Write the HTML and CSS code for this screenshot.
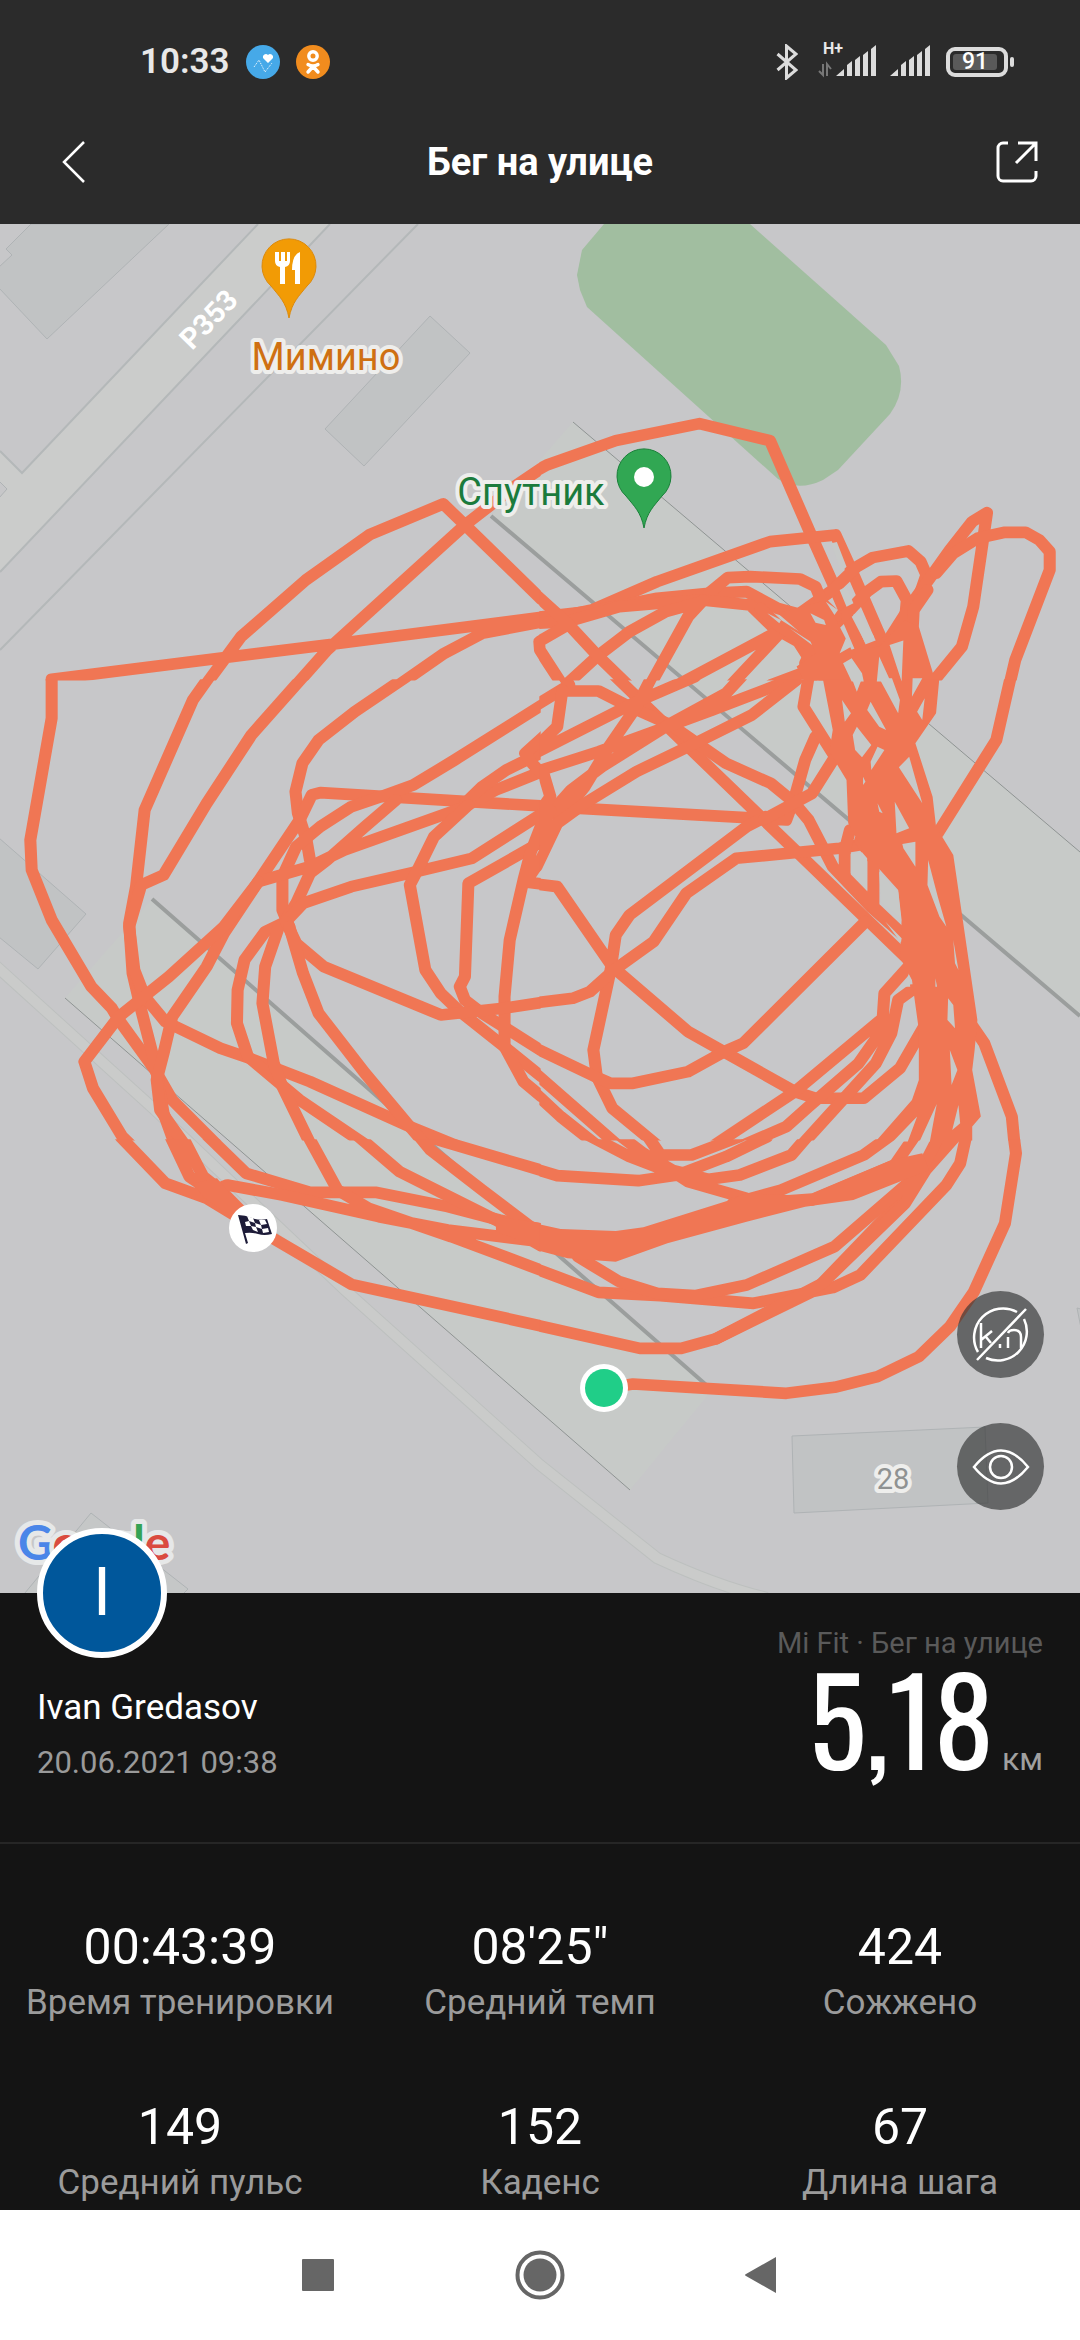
FILE: index.html
```html
<!DOCTYPE html>
<html lang="ru">
<head>
<meta charset="utf-8">
<meta name="viewport" content="width=device-width, initial-scale=1">
<title>Бег на улице</title>
<link rel="stylesheet" href="styles.css">
</head>
<body>
<header class="top">
  <div class="status">
    <div class="status-group">
      <span class="clock">10:33</span>
      <svg class="app-icon" viewBox="0 0 34 34" aria-hidden="true">
        <circle cx="17" cy="17" r="17" fill="#46a9e8"/>
        <path d="M22 18l-5-5a3 3 0 0 1 5-3 3 3 0 0 1 5 3z" fill="#fff"/>
        <path d="M8 22l5-7 6 12 7-9" fill="none" stroke="#fff" stroke-width="1" stroke-dasharray="1 1"/>
      </svg>
      <svg class="app-icon" viewBox="0 0 34 34" aria-hidden="true">
        <circle cx="17" cy="17" r="17" fill="#f18c1e"/>
        <g fill="none" stroke="#fff" stroke-width="3.4" stroke-linecap="round">
          <circle cx="17" cy="11" r="4.2"/>
          <path d="M12 19.500q5 3 10 0M17 21.500l-5 5.500M17 21.500l5 5.500"/>
        </g>
      </svg>
    </div>
    <div class="status-group status-right">
      <svg class="bluetooth" viewBox="0 0 22 36" aria-hidden="true"><path d="M1.500 10L20 26l-9.500 8V2L20 10 1.500 26" fill="none" stroke="#dcdcdc" stroke-width="3"/></svg>
      <div class="network">
        <svg class="network-icon" viewBox="0 0 58 34" aria-hidden="true">
          <g fill="#dcdcdc"><path d="M18 31l8-7v7zM29 20l5-4v15h-5zM37 15l5-4v20h-5zM45 10l5-4v25h-5zM53 4l5-4v31h-5z"/></g>
          <path d="M5 19v11l-4-4M9 31V19l4 5" fill="none" stroke="#777" stroke-width="2"/>
        </svg>
        <span class="network-type">H+</span>
      </div>
      <svg class="signal" viewBox="0 0 40 34" aria-hidden="true"><path fill="#dcdcdc" d="M0 31l8-7v7zM11 20l5-4v15h-5zM19 15l5-4v20h-5zM27 10l5-4v25h-5zM35 4l5-4v31h-5z"/></svg>
      <div class="battery"><span class="battery-level">91</span></div>
    </div>
  </div>
  <div class="titlebar">
    <button class="icon-button" type="button" aria-label="Назад">
      <svg class="back-icon" viewBox="0 0 24 44"><path d="M22 2L2 22l20 20" fill="none" stroke="#fff" stroke-width="2.500"/></svg>
    </button>
    <h1 class="title">Бег на улице</h1>
    <button class="icon-button icon-button-end" type="button" aria-label="Поделиться">
      <svg class="share-icon" viewBox="0 0 42 42"><path d="M12 2H7a5 5 0 0 0-5 5v28a5 5 0 0 0 5 5h28a5 5 0 0 0 5-5v-5M22 2h18v18M39 3L20 22" fill="none" stroke="#fff" stroke-width="3"/></svg>
    </button>
  </div>
</header>

<main>
<section class="map" aria-label="Карта маршрута">
  <svg class="map-canvas" viewBox="0 224 1080 1369">
    <defs>
      <clipPath id="tile"><rect x="-2" y="-2" width="1572" height="1384"/></clipPath>
    </defs>
    <rect y="224" width="1080" height="1369" fill="#c7c7c9"/>
    <!-- roads and buildings -->
    <path d="M258 224L22 473 0 451V572L330 224z" fill="#cbcccb"/>
    <g fill="none" stroke="#b4b8b9" stroke-width="2">
      <path d="M258 224L22 473 0 451M330 224L0 572M418 224L0 650"/>
    </g>
    <g fill="#c1c3c4" stroke="#afb3b5" stroke-width="1">
      <path d="M31 224L6 249l6 6L-1 267v21l48 51 122-115zM430 316l40 37-106 113-39-37zM-1 838l87 76-48 55-39-32z"/>
      <path d="M792 1436l193-9 3 76-194 10zM1081 1309l-4-1 4 20z"/>
      <path d="M91 1513l97 76-10 10H20z" fill="#c5c7c7"/>
      <path d="M-1 481l8 8-8 9z" fill="#c7c7c9"/>
    </g>
    <g fill="#c7cac8">
      <path d="M65 998l87-99 560 491-82 100zM491 516l82-94 507 430v162z"/>
    </g>
    <path d="M65 998l565 492M573 422l507 430" fill="none" stroke="#8f9493" stroke-width="1"/>
    <path d="M152 899l560 491M491 516l589 500" fill="none" stroke="#9b9e9d" stroke-width="4"/>
    <path d="M-5 965L155 1110l190 180 195 175 117 93q60 28 110 40" fill="none" stroke="#bdc0bf" stroke-width="12"/>
    <path d="M-5 965L155 1110l190 180 195 175 117 93q60 28 110 40" fill="none" stroke="#cacbca" stroke-width="10"/>
    <path d="M604 224L582 250 577 275 580 290 587 307 778 479Q798 492 823 480L838 470 890 414Q906 392 899 366L886 345 750 224z" fill="#a1bea0"/>

    <text class="road-name" transform="translate(192 351) rotate(-46)">P353</text>

    <!-- the track, one group per map tile -->
    <g class="track">
      <g transform="translate(0 220) scale(.3444 .3333)" clip-path="url(#tile)">
        <path d="M600 1390L700 1250 888 1080 1075 943 1287 852 1350 915 1572 1138M1572 745L1500 795 1350 915 950 1290 860 1395M150 1400V1378L970 1272 1572 1192M1165 1390L1290 1300 1400 1240 1572 1206M1600 1244L1566 1265 1568 1290 1580 1310"/>
      </g>
      <g transform="translate(540 220) scale(.3444 .3333)" clip-path="url(#tile)">
        <path d="M-10 752L20 735 220 662 463 611 668 662 785 940 850 1090 950 1330 970 1390"/>
        <path d="M-10 1205L150 1170 340 1085 668 965 858 945 900 1040 980 1230 1050 1390"/>
        <path d="M755 1180L850 1110 920 1040 965 1013 1070 993 1105 1025 1122 1065 1090 1160 1000 1290"/>
        <path d="M810 1260L900 1170 950 1115 990 1085 1035 1083 1065 1140 1060 1200 1070 1390"/>
        <path d="M1000 1280L1080 1150 1190 990 1255 905 1298 878 1285 970 1258 1160 1225 1280 1130 1400"/>
        <path d="M1150 1060L1200 1000 1270 955 1350 937 1410 937 1450 960 1480 995 1480 1050 1380 1320 1363 1395"/>
        <path d="M1125 1110L1085 1170 1082 1230 1125 1395"/>
        <path d="M-10 1192L140 1175 340 1135 490 1120 600 1115 690 1165 760 1185 830 1250"/>
        <path d="M490 1120L545 1073 610 1070 755 1077 800 1100 820 1150 860 1190"/>
        <path d="M-10 1210L80 1205 230 1160 350 1150 470 1140 610 1155 680 1225 750 1265 790 1330"/>
        <path d="M470 1145L365 1175 260 1235 165 1310 70 1400M475 1140L430 1190 320 1395M690 1235L400 1395M700 1235L555 1395"/>
        <path d="M-10 1126L80 1210 165 1305 260 1400M80 1215L-3 1265 -1 1290 65 1395"/>
        <path d="M640 1165L690 1215 790 1280 830 1390M670 1395L800 1345 900 1310 1050 1250M790 1390L770 1330 830 1200"/>
      </g>
      <g transform="translate(0 680) scale(.3444 .3333)" clip-path="url(#tile)">
        <path d="M150 -10V115L88 480 92 570 150 720 265 920 325 985 345 1020 450 1170 500 1260 635 1400"/>
        <path d="M608 -10L560 60 420 390 395 620 375 730 385 880 410 990 450 1150 475 1300 510 1400"/>
        <path d="M880 -10L730 165 600 370 475 585 410 615 375 740 390 870 420 950 480 1025 640 1105 725 1135 900 1205 1190 1340 1320 1395"/>
        <path d="M1180 -10L1030 95 925 180 878 250 858 335 865 400 890 480 900 540"/>
        <path d="M1572 378L930 338 905 345 870 420 750 605 650 760 600 860 500 1010 475 1120 455 1200 465 1290 540 1400"/>
        <path d="M1572 76L1320 240 1200 315 1120 345 1020 380 930 440 860 500 820 590 820 690 840 740"/>
        <path d="M1150 360L1060 440 950 540 900 580 860 670 830 720M750 605L900 560 1000 510 1340 385 1440 330 1572 275"/>
        <path d="M1350 370L1400 320 1470 270 1572 218M1590 390L1370 535 1200 577 1020 620 880 670 830 725 770 755 710 840 690 930 688 1030 720 1130 800 1200 870 1260 1070 1400"/>
        <path d="M810 740L770 860 762 970 795 1150 820 1220 905 1400"/>
        <path d="M1360 375L1260 470 1210 575 1190 615 1235 870 1280 940 1330 990 1470 1105 1572 1190"/>
        <path d="M1590 475L1360 610 1350 890 1335 920 1350 960 1400 1000 1572 1112"/>
        <path d="M1570 440L1540 520 1520 600 1480 780 1465 950 1465 1100 1520 1205 1572 1250M1520 605L1572 612M1600 480L1570 540 1530 600"/>
        <path d="M830 725L860 790 940 860 1280 1005 1460 985 1572 968"/>
        <path d="M840 740L880 880 925 1000 1060 1180 1190 1340 1240 1400"/>
        <path d="M750 605L650 740 490 890 345 1010 245 1145 270 1225 355 1370 385 1400M1600 150L1525 220 1545 250 1572 280"/>
      </g>
      <g transform="translate(540 680) scale(.3444 .3333)" clip-path="url(#tile)">
        <path d="M210 -20L350 120 560 330 740 510 950 720 1070 840M-10 378L690 418 715 420 740 350 770 240 800 170"/>
        <path d="M780 -10L765 80 850 220M-10 75L85 15 70 -10M80 33L170 33 250 75 380 135 450 185 540 250 670 310 735 365 780 420 850 560 960 680 1060 770"/>
        <path d="M65 30L50 140 -10 200M-10 217L270 70 450 -10M325 -10L280 80 200 200 130 320 60 410 -10 535M-10 275L170 215 370 140 500 90 740 -5M585 -10L540 40 380 130 180 260 90 330 30 400"/>
        <path d="M745 0L615 105 450 190 280 275 130 370 50 430 -10 560M-10 265L10 280 30 350 -10 410M30 390L-10 480"/>
        <path d="M655 410L600 440 260 705 220 765 205 870 155 1110 165 1190 210 1285 345 1400M-10 612L50 620 210 860 430 1055 740 1235 800 1255 940 1255 1045 1165 1115 1040"/>
        <path d="M-10 968L95 955 145 935 215 870 330 785 425 640 570 535 870 505 1100 465 1155 460 1325 180 1367 -10"/>
        <path d="M-10 1106L160 1190 205 1210 270 1210 430 1175 535 1115 590 1090 945 725M-10 1183L230 1400M-10 1243L60 1310 170 1400"/>
        <path d="M650 418L790 340 860 225M900 450L885 510 885 590 970 680M930 480L968 540 968 680 1060 770"/>
        <path d="M1070 860L1000 940 995 1015 740 1235 500 1400M1080 930L1040 960 1020 1060 975 1150 760 1395M1000 1040L925 1150 780 1280 715 1340 580 1400"/>
        <path d="M1180 530L1250 1030 1290 1090 1370 1310 1378 1395"/>
      </g>
      <g transform="translate(0 1140) scale(.3444 .3333)" clip-path="url(#tile)">
        <path d="M350 -10L480 130 600 175 735 260 900 360 1020 433 1572 558M495 -10L550 110 700 215M530 -10L590 110 640 150 735 250M600 -15L715 100 900 157 1090 157 1300 200 1450 240 1572 268"/>
        <path d="M600 160L660 135 820 165 1100 230 1300 270 1572 305M890 -20L980 150 1070 205 1310 290 1572 391M1030 -20L1160 95 1440 240 1572 318M1210 -20L1250 30 1400 150 1572 285M1240 -10L1572 91"/>
      </g>
      <g transform="translate(540 1140) scale(.3444 .3333)" clip-path="url(#tile)">
        <path d="M190 745L270 732 715 760 855 742 980 710 1100 650 1190 560 1260 455 1350 250 1382 40 1375 -15"/>
        <path d="M-10 556L290 625 410 625 510 597 800 450 1070 160M1238 -15L1220 70 1180 135 930 405 850 443 620 490 350 467 170 457 -10 387"/>
        <path d="M1210 -15L1120 90 1060 190 820 430 510 597M1180 0L1090 110 855 320 600 435 450 467 340 460 230 425 110 350"/>
        <path d="M-10 88L50 107 285 122 400 105 540 50 660 -10M140 -15L260 50 400 105 430 125 600 175M310 -15L350 45 440 45 580 -10M780 -15L730 45 580 105 490 118 380 90M230 -15L300 40 400 100"/>
        <path d="M1020 -15L940 45 700 150 560 190M1090 -15L1030 75 790 180M1160 -15L1115 75 1020 100"/>
      </g>
    </g>
    <!-- stretches where the laps merge -->
    <g class="track-fill">
      <g transform="translate(540 220) scale(.3444 .3333)" clip-path="url(#tile)"><path d="M745 1165L830 1140 880 1240 905 1290 985 1280 1060 1200 1100 1220 1150 1390H770L745 1340 800 1300 790 1270 730 1215 690 1180z"/></g>
      <g transform="translate(540 680) scale(.3444 .3333)" clip-path="url(#tile)"><path d="M820 -10L850 150 840 215 890 300 895 430 940 515 1040 630 1050 720 1045 830 1080 900 1100 1050V1200L1080 1260 970 1390H1255V1340L1280 1310 1255 1170 1262 1110 1270 1020 1200 525 1150 440 1140 350 1090 190 1150 100 1160 -10z"/></g>
      <g transform="translate(0 1140) scale(.3444 .3333)" clip-path="url(#tile)"><path d="M560 130L630 115 700 200 670 230 590 170zM1440 230L1590 252V332L1440 275z"/></g>
      <g transform="translate(540 1140) scale(.3444 .3333)" clip-path="url(#tile)"><path d="M-5 252L60 267 220 273 300 262 545 182 600 160 720 165 790 160 1020 60 1110 40 1130 90 910 180 770 200 600 245 370 310 220 365 80 355 -5 332z"/></g>
    </g>
    <g class="track-gap">
      <path transform="translate(540 220) scale(.3444 .3333)" d="M785 1180L825 1200 830 1215 800 1208zM870 1110L890 1100 910 1150 890 1160zM905 1190L925 1175 970 1250 945 1270zM1015 1275L1055 1262 1050 1385zM985 1310L1018 1385H978zM830 1145L865 1170 855 1185zM890 1250L905 1280 870 1300zM880 1330L905 1315 935 1360 940 1385H905zM845 970L862 966 890 1040 875 1055zM660 1180L700 1200 695 1210zM725 1225L785 1265 790 1275z"/>
      <path transform="translate(540 680) scale(.3444 .3333)" d="M877 60L903 100 885 125zM920 140L962 195 935 232 915 210 908 165zM960 65L1005 150 985 140 950 90zM1117 55L1095 95 1110 120zM980 200L1000 210 962 270 960 245zM1072 230L1110 370 1042 262zM1030 365L1072 445 1035 460zM1052 492L1090 485V560L1055 505zM985 575L1040 635 1048 715 990 665zM902 522L935 517 950 535V630L902 580zM1127 540L1155 650 1180 740 1160 710 1125 615zM1200 780L1215 870 1205 850zM1185 955L1200 975 1205 1045 1183 1020zM1190 1110L1212 1170 1195 1215zM1152 1272L1132 1385H1102zM1095 1310L1068 1385H1025zM1215 1275L1220 1330 1197 1350zM1070 880L1075 920H1062zM938 290L945 305 938 315zM980 370L995 400 985 395zM1148 895L1153 920H1148zM1082 -5H1110L1080 50zM985 -5H1022L1045 60 1040 100zM905 -5H935L920 35zM1003 725L1050 775 1048 788z"/>
    </g>

    <!-- places -->
    <path d="M289 318c-3-16-10-22-18-32a27 27 0 1 1 36 0c-8 10-15 16-18 32z" fill="#f29b05" stroke="#dc8a0c" stroke-width="1"/>
    <path d="M275 252v9q0 5 5 6v17h5v-17q5-1 5-6v-9h-3v9h-2v-9h-4v9h-2v-9zM300 252q-8 3-8 18h3v14h5z" fill="#fff"/>
    <path d="M644 528c-3-16-10-22-18-32a27 27 0 1 1 36 0c-8 10-15 16-18 32z" fill="#31a753" stroke="#188038" stroke-width="1"/>
    <circle cx="644" cy="477" r="10" fill="#fff"/>
    <text class="place place-food" x="326" y="370" text-anchor="middle">Мимино</text>
    <text class="place place-sport" x="531" y="505" text-anchor="middle">Спутник</text>
    <text class="house" x="893" y="1489" text-anchor="middle">28</text>
    <text class="brand" x="18" y="1560"><tspan fill="#4a86e8">G</tspan><tspan fill="#da4b3f">o</tspan><tspan fill="#f4b400">o</tspan><tspan fill="#4a86e8">g</tspan><tspan fill="#34a355">l</tspan><tspan fill="#da4b3f">e</tspan></text>

    <!-- start and finish -->
    <circle cx="604" cy="1388" r="24" fill="#fff"/><circle cx="604" cy="1388" r="19" fill="#20ce88"/>
    <circle cx="253" cy="1228" r="24" fill="#fff"/>
    <g transform="translate(238 1214)">
      <path d="M0 1q7 0 14 3 8 3 15 1l5 15q-8 2-14 0-6-2-13-1l3 10-2 1z" fill="#1d1b38"/>
      <path d="M9 2l6 2 2 5-6-2zM21 6l6 0 2 4-6 1zM17 9l6 2 1 4-6-2zM7 8l4-1 2 5-5 0zM13 12l5 1 2 5-5-2zM24 15l6-1 1 4-6 1z" fill="#fff"/>
    </g>
  </svg>
  <div class="map-actions">
    <button class="map-button" type="button" aria-label="Скрыть километры">
      <svg class="map-icon" viewBox="0 0 60 60"><g fill="none" stroke="#fff" stroke-width="2.500">
        <path d="M46 7A29 29 0 0 0 7 47M15 53A29 29 0 0 0 53 14M55 4L6 55"/>
        <path d="M10 18v25M21 26l-11 9M15 32l5 6M29 39v4M37 43V32M37 28q1-3 6-3 7 0 7 7v11"/></g></svg>
    </button>
    <button class="map-button" type="button" aria-label="Показать карту">
      <svg class="map-icon" viewBox="0 0 60 60"><g fill="none" stroke="#fff" stroke-width="2.500"><path d="M3 30Q30-3 57 30 30 63 3 30z"/><circle cx="30" cy="30" r="11"/></g></svg>
    </button>
  </div>
</section>

<section class="summary">
  <div class="person">
    <div class="avatar">I</div>
    <div class="name">Ivan Gredasov</div>
    <time class="date" datetime="2021-06-20T09:38">20.06.2021 09:38</time>
  </div>
  <div class="result">
    <div class="source">Mi Fit · Бег на улице</div>
    <div class="distance"><span class="distance-value">5,18</span><span class="distance-unit">км</span></div>
  </div>
</section>

<dl class="stats">
  <div class="stat"><dt class="stat-label">Время тренировки</dt><dd class="stat-value">00:43:39</dd></div>
  <div class="stat"><dt class="stat-label">Средний темп</dt><dd class="stat-value">08'25"</dd></div>
  <div class="stat"><dt class="stat-label">Сожжено</dt><dd class="stat-value">424</dd></div>
  <div class="stat"><dt class="stat-label">Средний пульс</dt><dd class="stat-value">149</dd></div>
  <div class="stat"><dt class="stat-label">Каденс</dt><dd class="stat-value">152</dd></div>
  <div class="stat"><dt class="stat-label">Длина шага</dt><dd class="stat-value">67</dd></div>
</dl>
</main>

<nav class="system-nav" aria-label="Системная навигация">
  <button class="nav-button" type="button" aria-label="Последние"><svg class="nav-icon" viewBox="0 0 60 60"><rect x="14" y="14" width="32" height="32" rx="1" fill="#666"/></svg></button>
  <button class="nav-button" type="button" aria-label="Домой"><svg class="nav-icon" viewBox="0 0 60 60"><circle cx="30" cy="30" r="22.500" fill="none" stroke="#666" stroke-width="4"/><circle cx="30" cy="30" r="16.500" fill="#666"/></svg></button>
  <button class="nav-button" type="button" aria-label="Назад"><svg class="nav-icon" viewBox="0 0 60 60"><path d="M44 12v36L14 31q-2-1 0-2z" fill="#666"/></svg></button>
</nav>
</body>
</html>
```

FILE: styles.css
```css
* { box-sizing: border-box; }

body {
  margin: 0;
  background: #141414;
  color: #fff;
  font-family: Roboto, "Noto Sans", sans-serif;
}

button {
  padding: 0;
  border: 0;
  background: none;
  color: inherit;
  font: inherit;
}

svg { display: block; }

.top {
  background: #2b2b2b;
  padding-top: 40px;
}

.status {
  display: flex;
  justify-content: space-between;
  align-items: center;
  height: 44px;
  padding: 0 72px 0 140px;
}

.status-group {
  display: flex;
  align-items: center;
  gap: 16px;
}

.status-right { gap: 14px; }

.clock {
  color: #e8e8e8;
  font-size: 35px;
  font-weight: 600;
  line-height: 40px;
}

.app-icon { width: 34px; height: 34px; }
.bluetooth { width: 22px; height: 36px; margin-right: 6px; }
.network { position: relative; }
.network-icon { width: 58px; height: 34px; }

.network-type {
  position: absolute;
  left: 5px;
  top: -4px;
  color: #e8e8e8;
  font-size: 16px;
  font-weight: 700;
  line-height: 16px;
}

.signal { width: 40px; height: 34px; }

.battery {
  position: relative;
  width: 62px;
  height: 30px;
  padding: 3px;
  border: 4px solid #dcdcdc;
  border-radius: 9px;
  margin-left: 2px;
}

.battery::after {
  content: "";
  position: absolute;
  right: -10px;
  top: 6px;
  width: 4px;
  height: 10px;
  border-radius: 2px;
  background: #dcdcdc;
}

.battery-level {
  display: block;
  width: 44px;
  border-radius: 3px;
  background: #5a5a5a;
  font-size: 23px;
  font-weight: 500;
  line-height: 16px;
  text-align: center;
}

.titlebar {
  display: grid;
  grid-template-columns: 1fr auto 1fr;
  align-items: center;
  height: 140px;
  padding: 16px 42px 0 62px;
}

.icon-button {
  display: flex;
  align-items: center;
  width: 64px;
  height: 64px;
}

.icon-button-end {
  justify-content: flex-end;
  justify-self: end;
}

.back-icon { width: 24px; height: 44px; }
.share-icon { width: 42px; height: 42px; }

.title {
  margin: 0 20px 0 0;
  font-size: 38px;
  font-weight: 700;
  line-height: 44px;
}

.map { position: relative; }
.map-canvas { width: 100%; height: auto; }

.track path {
  fill: none;
  stroke: #f07654;
  stroke-width: 35px;
  stroke-linecap: round;
  stroke-linejoin: round;
}

.track-fill path { fill: #f07654; }
.track-gap path { fill: #c7c9c8; }

.road-name {
  fill: #fff;
  font-size: 29px;
  font-weight: 700;
}

.place {
  font-size: 38px;
  stroke: #eeeeec;
  stroke-width: 8px;
  stroke-linejoin: round;
  paint-order: stroke;
}

.place-food { fill: #cf7012; }
.place-sport { fill: #1b7b3c; }

.house {
  fill: #8f9292;
  font-size: 29px;
  stroke: #eeeeec;
  stroke-width: 8px;
  stroke-linejoin: round;
  paint-order: stroke;
}

.brand {
  font-family: Lato, sans-serif;
  font-size: 48px;
  font-weight: 700;
  stroke: #e6e8e8;
  stroke-width: 10px;
  stroke-linejoin: round;
  paint-order: stroke;
}

.map-actions {
  position: absolute;
  right: 36px;
  bottom: 83px;
  display: flex;
  flex-direction: column;
  gap: 45px;
}

.map-button {
  display: flex;
  align-items: center;
  justify-content: center;
  width: 87px;
  height: 87px;
  border-radius: 50%;
  background: rgba(50, 51, 52, 0.66);
}

.map-icon { width: 60px; height: 60px; }

.summary {
  display: flex;
  justify-content: space-between;
  padding: 0 37px 59px;
  border-bottom: 2px solid #262626;
}

.person {
  position: relative;
  margin-top: -65px;
}

.avatar {
  display: flex;
  align-items: center;
  justify-content: center;
  width: 130px;
  height: 130px;
  margin-bottom: 28px;
  border: 6px solid #fff;
  border-radius: 50%;
  background: #00579b;
  font-size: 66px;
  line-height: 66px;
}

.name {
  margin-bottom: 13px;
  font-size: 35px;
  line-height: 44px;
}

.date {
  display: block;
  color: #9a9a9a;
  font-size: 31px;
  line-height: 40px;
}

.result {
  padding-top: 32px;
  text-align: right;
}

.source {
  color: #5a5a5a;
  font-size: 29px;
  line-height: 36px;
}

.distance {
  display: flex;
  align-items: baseline;
  justify-content: flex-end;
  gap: 8px;
}

.distance-value {
  font-family: Oswald, "Roboto Condensed", "Liberation Sans Narrow", Roboto, sans-serif;
  font-size: 120px;
  line-height: 110px;
}

.distance-unit {
  color: #a0a0a0;
  font-size: 32px;
}

.stats {
  display: grid;
  grid-template-columns: repeat(3, 1fr);
  row-gap: 74px;
  margin: 0;
  padding: 75px 0 5px;
}

.stat {
  display: flex;
  flex-direction: column-reverse;
  align-items: center;
  gap: 6px;
}

.stat-value {
  margin: 0;
  font-size: 50px;
  line-height: 56px;
}

.stat-label {
  color: #9b9b9b;
  font-size: 35px;
  line-height: 44px;
  white-space: nowrap;
}

.system-nav {
  display: flex;
  align-items: center;
  justify-content: center;
  gap: 162px;
  height: 130px;
  background: #fff;
}

.nav-button { width: 60px; height: 60px; }
.nav-icon { width: 60px; height: 60px; }
```
